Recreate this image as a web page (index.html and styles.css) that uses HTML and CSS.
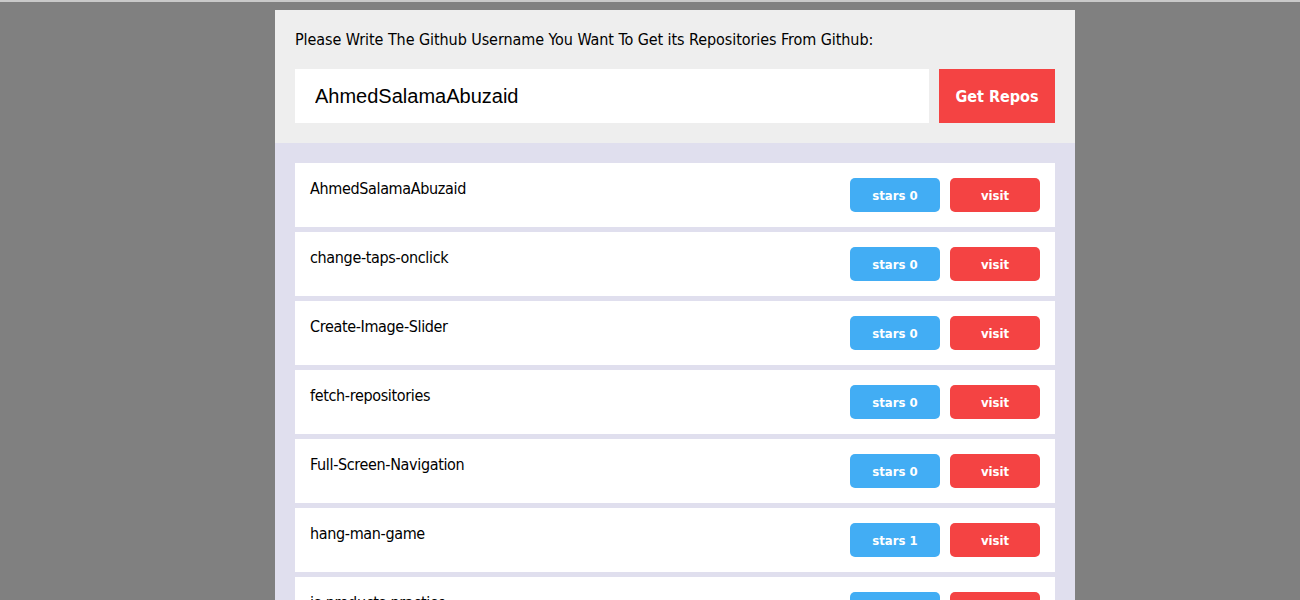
FILE: index.html
```html
<!DOCTYPE html>
<html>
<head>
<meta charset="utf-8">
<link rel="stylesheet" href="styles.css">
</head>
<body>
<div class="container">
  <div class="get-form">
    <p class="label">Please Write The Github Username You Want To Get its Repositories From Github:</p>
    <div class="form-row">
      <input class="username" type="text" value="AhmedSalamaAbuzaid">
      <button class="get-btn">Get Repos</button>
    </div>
  </div>
  <div class="repos">
    <div class="repo"><span class="name">AhmedSalamaAbuzaid</span><div class="actions"><span class="stars">stars 0</span><a class="visit">visit</a></div></div>
    <div class="repo"><span class="name">change-taps-onclick</span><div class="actions"><span class="stars">stars 0</span><a class="visit">visit</a></div></div>
    <div class="repo"><span class="name">Create-Image-Slider</span><div class="actions"><span class="stars">stars 0</span><a class="visit">visit</a></div></div>
    <div class="repo"><span class="name">fetch-repositories</span><div class="actions"><span class="stars">stars 0</span><a class="visit">visit</a></div></div>
    <div class="repo"><span class="name">Full-Screen-Navigation</span><div class="actions"><span class="stars">stars 0</span><a class="visit">visit</a></div></div>
    <div class="repo"><span class="name">hang-man-game</span><div class="actions"><span class="stars">stars 1</span><a class="visit">visit</a></div></div>
    <div class="repo"><span class="name">js-products-practice</span><div class="actions"><span class="stars">stars 0</span><a class="visit">visit</a></div></div>
  </div>
</div>
</body>
</html>
```
FILE: styles.css
```css
html {
  background: #808080;
  border-top: 2px solid #c9c9c9;
}
body {
  margin: 0;
  padding: 8px 0 0 50px;
  font-family: "DejaVu Sans Condensed", "DejaVu Sans", sans-serif;
}
.container {
  width: 800px;
  margin: 0 auto;
}
.get-form {
  background: #eeeeee;
  padding: 20px;
}
.label {
  margin: 0 0 20px;
  font-size: 16px;
  line-height: 19px;
  letter-spacing: -0.07px;
  color: #000;
}
.form-row {
  display: flex;
  gap: 10px;
}
.username {
  flex: 1;
  height: 54px;
  box-sizing: border-box;
  border: none;
  outline: none;
  padding: 0 20px;
  font-family: "Liberation Sans", Arial, sans-serif;
  font-size: 20px;
  color: #000;
  background: #fff;
}
.get-btn {
  width: 116px;
  height: 54px;
  border: none;
  background: #f44343;
  color: #fff;
  font-family: "DejaVu Sans Condensed", "DejaVu Sans", sans-serif;
  font-weight: bold;
  font-size: 16px;
}
.repos {
  background: #e0dfee;
  padding: 20px;
}
.repo {
  background: #fff;
  padding: 15px;
  margin-bottom: 5px;
  display: flex;
  justify-content: space-between;
  align-items: flex-start;
}
.name {
  font-size: 16px;
  line-height: 19px;
  letter-spacing: -0.35px;
  padding-top: 1px;
  color: #000;
}
.actions {
  display: flex;
  gap: 10px;
}
.stars, .visit {
  width: 90px;
  height: 34px;
  border-radius: 5px;
  color: #fff;
  font-weight: bold;
  font-size: 13px;
  display: flex;
  align-items: center;
  justify-content: center;
}
.stars {
  background: #42adf4;
}
.visit {
  background: #f44343;
}
```
